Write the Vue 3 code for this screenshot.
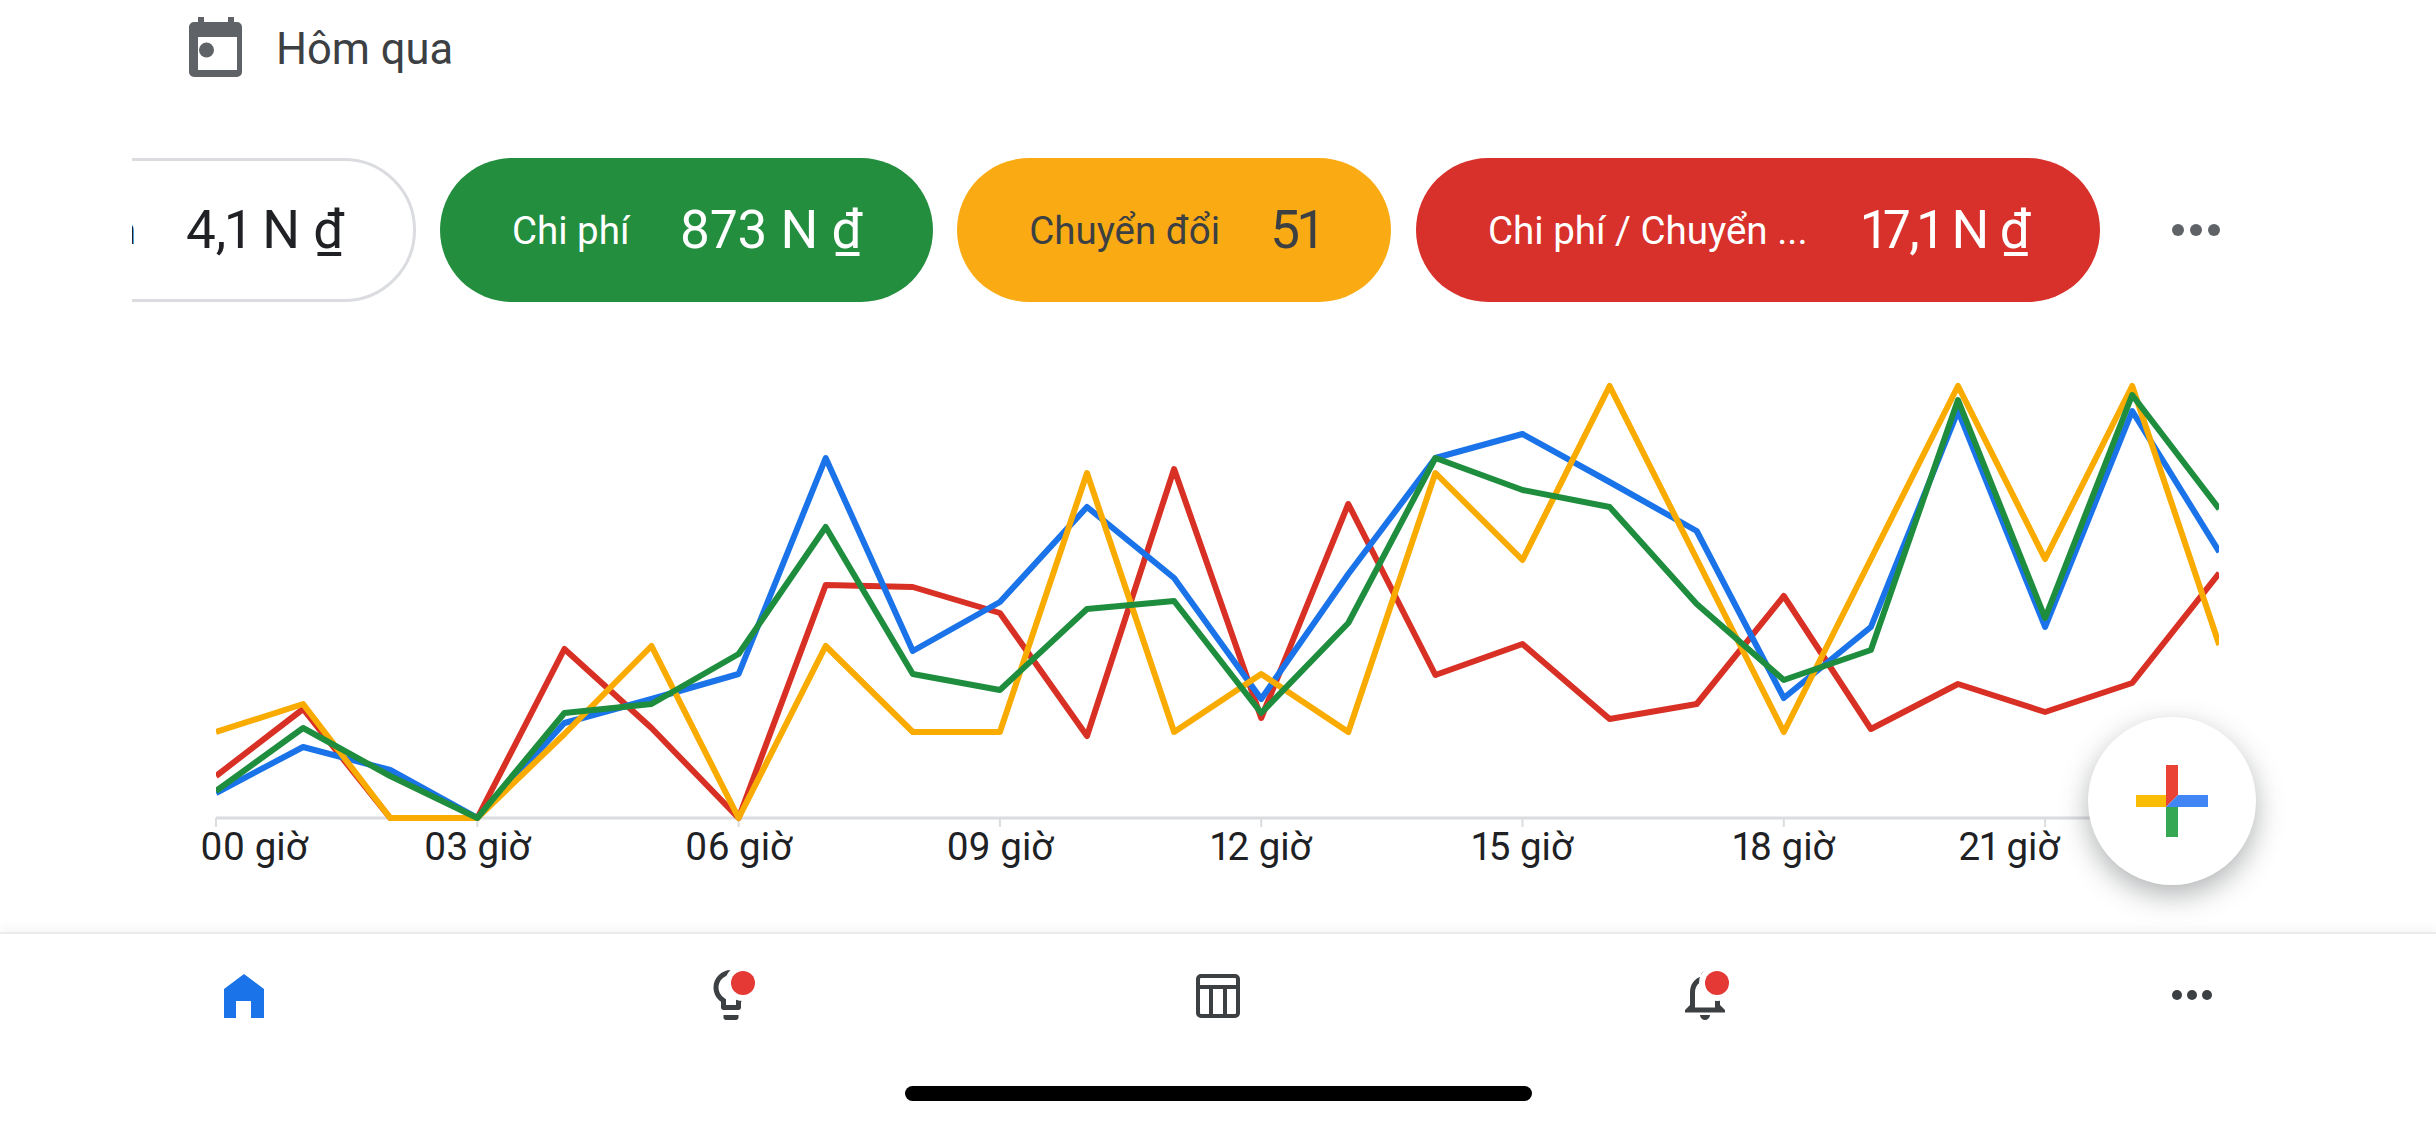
<script setup>
const X0 = 216;
const STEP = 87.1;
const BASE = 818;

const pills = [
  { key: 'white', label: 'CPC trung bình', value: '4,1 N ₫' },
  { key: 'green', label: 'Chi phí', value: '873 N ₫' },
  { key: 'yellow', label: 'Chuyển đổi', value: '51' },
  { key: 'red', label: 'Chi phí / Chuyển ...', value: '17,1 N ₫' }
];

const series = [
  { color: '#d93025', y: [775, 708, 817, 817, 648, 727, 817, 584, 586, 612, 735, 468, 717, 503, 674, 643, 718, 703, 595, 728, 683, 711, 682, 572] },
  { color: '#1a73e8', y: [792, 746, 769, 817, 722, 698, 673, 457, 650, 601, 506, 577, 698, 573, 457, 433, 481, 530, 697, 626, 410, 626, 410, 551] },
  { color: '#f9ab00', y: [731, 703, 817, 817, 733, 645, 817, 645, 731, 731, 472, 731, 673, 731, 472, 559, 385, 558, 731, 558, 385, 558, 385, 644] },
  { color: '#1e8e3e', y: [790, 727, 775, 817, 712, 703, 653, 526, 673, 689, 608, 600, 712, 622, 457, 489, 506, 603, 679, 649, 399, 617, 394, 508] }
];

const lines = series.map(s => ({
  color: s.color,
  points: s.y.map((v, i) => `${(X0 + STEP * i).toFixed(1)},${v + 1}`).join(' ')
}));

// label 00 and 21 do not sit centered on their tick
const ticks = [
  { h: 0, text: '00 giờ', tx: 254 },
  { h: 3, text: '03 giờ' },
  { h: 6, text: '06 giờ' },
  { h: 9, text: '09 giờ' },
  { h: 12, text: '12 giờ' },
  { h: 15, text: '15 giờ' },
  { h: 18, text: '18 giờ' },
  { h: 21, text: '21 giờ', tx: 2009 }
].map(t => ({ ...t, x: X0 + STEP * t.h, tx: t.tx || X0 + STEP * t.h }));
</script>

<template>
  <div class="page">
    <header class="date">
      <svg class="calendar" width="53" height="60" viewBox="0 0 53 60">
        <path d="M9 0h6v7h-6zM39 0h6v7h-6z" fill="#5f6368" />
        <path fill-rule="evenodd" fill="#5f6368" d="M5 5h43a5 5 0 0 1 5 5v45a5 5 0 0 1-5 5H5a5 5 0 0 1-5-5V10a5 5 0 0 1 5-5zM9 20v33h39V20z" />
        <circle cx="17.5" cy="33" r="7.5" fill="#5f6368" />
      </svg>
      <span>Hôm qua</span>
    </header>

    <section class="metrics">
      <div class="scroller">
        <div v-for="p in pills" :key="p.key" class="pill" :class="p.key">
          <span class="label">{{ p.label }}</span>
          <span class="value">{{ p.value }}</span>
        </div>
      </div>
      <div class="dots"><i></i><i></i><i></i></div>
    </section>

    <section class="chart">
      <svg width="2436" height="630" viewBox="0 302 2436 630">
        <defs>
          <clipPath id="plot">
            <rect x="216" y="302" width="2003" height="530" />
          </clipPath>
        </defs>
        <line x1="216" x2="2219" :y1="BASE" :y2="BASE" stroke="#dadce0" stroke-width="3" />
        <line v-for="t in ticks" :key="t.h" :x1="t.x" :x2="t.x" :y1="BASE" :y2="BASE + 9" stroke="#dadce0" stroke-width="2" />
        <g clip-path="url(#plot)">
          <polyline v-for="l in lines" :key="l.color" :points="l.points" fill="none" :stroke="l.color" stroke-width="6" stroke-linejoin="round" />
        </g>
        <text v-for="t in ticks" :key="t.text" class="tick" :x="t.tx" y="860" text-anchor="middle">{{ t.text }}</text>
      </svg>
      <button class="fab">
        <svg width="72" height="72" viewBox="0 0 72 72">
          <path d="M30 0h12v30L30 42z" fill="#ea4335" />
          <path d="M0 30h30v12H0z" fill="#fbbc04" />
          <path d="M42 30h30v12H30z" fill="#4285f4" />
          <path d="M30 42h12v30H30z" fill="#34a853" />
        </svg>
      </button>
    </section>

    <nav class="nav">
      <div class="item">
        <svg width="60" height="60" viewBox="0 0 60 60">
          <path d="M30 9l20 15v29H37V36H22v17H10V24z" fill="#1a73e8" />
        </svg>
      </div>
      <div class="item">
        <svg width="60" height="60" viewBox="0 0 24 24">
          <path fill="#3c4043" d="M9 21c0 .55.45 1 1 1h4c.55 0 1-.45 1-1v-1H9v1zm3-19C8.14 2 5 5.14 5 9c0 2.38 1.19 4.47 3 5.74V17c0 .55.45 1 1 1h6c.55 0 1-.45 1-1v-2.26c1.81-1.27 3-3.36 3-5.74 0-3.86-3.14-7-7-7zm2.85 11.1l-.85.6V16h-4v-2.3l-.85-.6C7.8 12.16 7 10.63 7 9c0-2.76 2.24-5 5-5s5 2.24 5 5c0 1.63-.8 3.16-2.15 4.1z" />
          <circle cx="16.8" cy="7.2" r="7.2" fill="#fff" />
          <circle cx="16.8" cy="7.2" r="4.8" fill="#e53935" />
        </svg>
      </div>
      <div class="item">
        <svg width="60" height="60" viewBox="0 0 60 60" fill="none" stroke="#3c4043" stroke-width="4">
          <rect x="10" y="11" width="40" height="40" rx="3" />
          <path d="M10 22h40M23 22v29M37 22v29" />
        </svg>
      </div>
      <div class="item">
        <svg width="60" height="60" viewBox="0 0 24 24">
          <path fill="#3c4043" d="M12 22c1.1 0 2-.9 2-2h-4c0 1.1.9 2 2 2zm6-6v-5c0-3.07-1.63-5.64-4.5-6.32V4c0-.83-.67-1.5-1.5-1.5s-1.5.67-1.5 1.5v.68C7.64 5.36 6 7.92 6 11v5l-2 2v1h16v-1l-2-2zm-2 1H8v-6c0-2.48 1.51-4.5 4-4.5s4 2.02 4 4.5v6z" />
          <circle cx="16.8" cy="7.2" r="7.2" fill="#fff" />
          <circle cx="16.8" cy="7.2" r="4.8" fill="#e53935" />
        </svg>
      </div>
      <div class="item">
        <div class="dots small"><i></i><i></i><i></i></div>
      </div>
    </nav>

    <div class="home-bar"></div>
  </div>
</template>

<style scoped>
.page {
  width: 2436px;
  height: 1125px;
  background: #fff;
  overflow: hidden;
  font-family: Roboto, "Liberation Sans", sans-serif;
  font-variant-numeric: proportional-nums;
  display: flex;
  flex-direction: column;
}
.date {
  display: flex;
  align-items: center;
  gap: 34px;
  height: 60px;
  margin-top: 17px;
  padding-left: 189px;
  font-size: 43.5px;
  line-height: 66px;
  color: #3c4043;
}
.date span {
  margin-top: 6px;
}
.metrics {
  display: flex;
  align-items: center;
  height: 144px;
  margin-top: 81px;
  padding-left: 132px;
}
.scroller {
  width: 1968px;
  height: 144px;
  display: flex;
  justify-content: flex-end;
  gap: 24px;
  overflow: hidden;
}
.pill {
  flex-shrink: 0;
  height: 144px;
  box-sizing: border-box;
  border-radius: 72px;
  padding: 0 71px 0 72px;
  display: flex;
  align-items: center;
  gap: 50px;
  white-space: nowrap;
}
.label {
  font-size: 38.5px;
}
.value {
  font-size: 53px;
}
.white {
  border: 3px solid #dadce0;
  color: #202124;
  padding-right: 69px;
}
.green {
  background: #228e3e;
  color: #fff;
}
.yellow {
  background: #faab14;
  color: #3c4043;
}
.yellow .value {
  letter-spacing: -1.5px;
}
.red {
  background: #d8302a;
  color: #fff;
  gap: 54px;
  margin-left: 1px;
}
.red .value {
  letter-spacing: -1.4px;
}
.dots {
  display: flex;
  gap: 6px;
  margin-left: 72px;
}
.dots i {
  width: 12px;
  height: 12px;
  border-radius: 50%;
  background: #5f6368;
}
.dots.small {
  margin-left: 0;
  gap: 5px;
}
.dots.small i {
  width: 10px;
  height: 10px;
  background: #3c4043;
}
.chart {
  position: relative;
  height: 630px;
}
.chart svg {
  display: block;
}
.tick {
  font-size: 38.5px;
  fill: #202124;
}
.fab {
  position: absolute;
  left: 2088px;
  top: 415px;
  width: 168px;
  height: 168px;
  border: 0;
  border-radius: 50%;
  background: #fff;
  box-shadow: 0 10px 28px rgba(60, 64, 67, 0.4);
  display: flex;
  align-items: center;
  justify-content: center;
  padding: 0;
}
.nav {
  height: 124px;
  box-sizing: border-box;
  border-top: 2px solid #ebebeb;
  box-shadow: 0 -6px 8px rgba(0, 0, 0, 0.03);
  display: grid;
  grid-template-columns: repeat(5, 1fr);
  background: #fff;
  position: relative;
}
.item {
  display: flex;
  align-items: center;
  justify-content: center;
}
.home-bar {
  width: 627px;
  height: 15px;
  margin: 30px auto 0;
  border-radius: 8px;
  background: #000;
}
</style>
